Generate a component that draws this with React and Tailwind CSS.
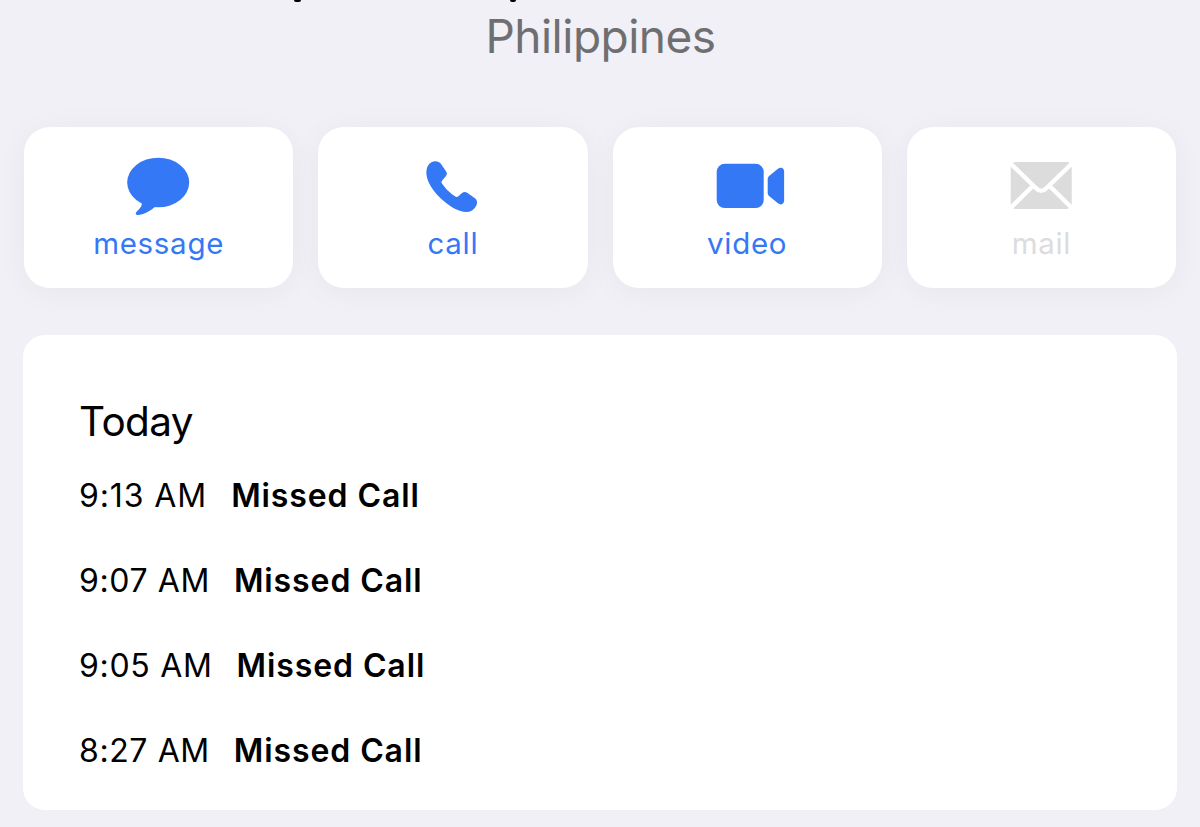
import React from "react";

const MessageIcon = () => (
  <svg className="w-20 h-16" viewBox="0 0 80 64" fill="currentColor">
    <ellipse cx="39.2" cy="28.5" rx="31" ry="24.8" />
    <path d="M22.2 47C23.8 50.8 22.4 52.8 17.8 57.6C15.8 59.9 17 61.4 19.6 61C25.8 60 30.8 57 35.6 53.2Z" />
  </svg>
);

const PhoneIcon = () => (
  <svg className="w-20 h-16" viewBox="0 0 80 64" fill="currentColor">
    <path d="M18 8.6C21.6 6.4 25.7 6.9 28 10L33 17.2C34.2 19 34.2 20.6 32.8 22.3L29.2 26.6C28.3 27.7 28.3 28.5 29 29.6C32 34.3 37.6 39.7 42.3 42.6C43.5 43.3 44.3 43.2 45.4 42.3L49 39C50.7 37.6 52.4 37.5 54.2 38.8L61.6 44C64.4 46.1 64.9 49.4 62.8 52.4C59.4 58 54.2 59 47.5 57C33.2 52.6 14.8 34.3 13.5 20.8C13 15.5 14.3 11.2 18 8.6Z" />
  </svg>
);

const VideoIcon = () => (
  <svg className="w-20 h-16" viewBox="0 0 80 64" fill="currentColor">
    <rect x="9.7" y="9.8" width="47" height="44.3" rx="8" />
    <path d="M60.7 25.5C60.7 23.8 61.1 22.9 62.4 21.8L70.6 15C73.9 12.3 77.1 13.9 77.1 17.5V46.6C77.1 50.2 73.9 51.7 70.6 49L62.4 42.2C61.1 41.1 60.7 40.2 60.7 38.5Z" />
  </svg>
);

const MailIcon = () => (
  <svg className="w-20 h-16" viewBox="0 0 80 64" fill="none">
    <rect x="9.7" y="8" width="61" height="47" rx="5" fill="currentColor" />
    <path
      d="M8.5 8.5L34.8 34C38.4 37.8 42 37.8 45.6 34L71.9 8.5M8.5 55L31.5 32.2M71.9 55L48.9 32.2"
      stroke="white"
      strokeWidth="4.4"
    />
  </svg>
);

const actions = [
  { label: "message", icon: MessageIcon, color: "text-[#3478f6]" },
  { label: "call", icon: PhoneIcon, color: "text-[#3478f6]" },
  { label: "video", icon: VideoIcon, color: "text-[#3478f6]" },
  { label: "mail", icon: MailIcon, color: "text-[#dcdcdd]" },
];

const calls = [
  { time: "9:13 AM", type: "Missed Call", spacing: "tracking-[0.9px]" },
  { time: "9:07 AM", type: "Missed Call", spacing: "tracking-[0.6px]" },
  { time: "9:05 AM", type: "Missed Call", spacing: "tracking-[0.7px]" },
  { time: "8:27 AM", type: "Missed Call", spacing: "tracking-[0.6px]" },
];

const App = () => {
  return (
    <div className="h-[827px] w-[1200px] overflow-hidden bg-[#f1f0f6] font-['Inter',sans-serif] text-black">
      {/* lower edge of the number that is scrolled off the top */}
      <div className="flex h-2 items-start justify-between pl-[294px] pr-[684px]">
        <span className="h-[2px] w-[7px] rounded-b-sm bg-black" />
        <span className="h-[2px] w-[6px] rounded-b-sm bg-black" />
      </div>

      <h1 className="h-14 pl-px text-center text-[46px] leading-[56px] font-normal tracking-[-0.5px] text-[#6f6f72]">
        Philippines
      </h1>

      <div className="mt-[63px] grid grid-cols-4 gap-[25px] px-6">
        {actions.map(({ label, icon: Icon, color }) => (
          <button
            key={label}
            className={`flex h-[161px] flex-col items-center rounded-[26px] bg-white pt-[27px] shadow-[0_4px_32px_rgba(0,0,0,0.045)] ${color}`}
          >
            <Icon />
            <span className="mt-[5px] h-10 text-[29.5px] leading-10 tracking-[0.7px]">
              {label}
            </span>
          </button>
        ))}
      </div>

      <div className="mx-[23px] mt-[47px] h-[475px] rounded-[22px] bg-white pl-14 pt-[62px]">
        <h2 className="h-[50px] text-[40.5px] leading-[50px] font-normal tracking-[-0.6px]">
          Today
        </h2>
        <ul className="mt-[6.5px]">
          {calls.map((call) => (
            <li key={call.time} className="flex h-[85.3px] gap-6 text-[32px] leading-[84px]">
              <span className={call.spacing}>{call.time}</span>
              <span className="font-semibold tracking-[0.9px]">{call.type}</span>
            </li>
          ))}
        </ul>
      </div>
    </div>
  );
};

export default App;
